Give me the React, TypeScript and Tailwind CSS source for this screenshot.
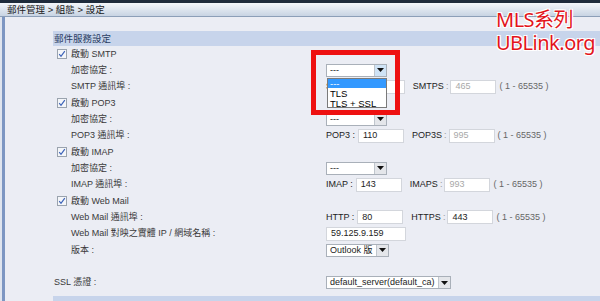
import React from 'react';

const ROW = 'h-[16.33px] flex items-center';

function Check() {
  return (
    <span className="w-[10px] h-[10px] border border-[#9aa3ae] bg-[#f4f6f9] flex items-center justify-center mr-[4px] shrink-0">
      <svg width="8" height="8" viewBox="0 0 8 8">
        <path d="M1.2 4.2 L3 6.3 L6.8 1.2" stroke="#3b62b8" strokeWidth="1.2" fill="none" />
      </svg>
    </span>
  );
}

function Select({ value, w, hover }: { value: string; w?: string; hover?: boolean }) {
  return (
    <div className={`${w ?? ''} h-[13px] border border-[#a9b0b9] bg-white flex items-center`}>
      <span className="flex-1 pl-[3px] pr-[3px] text-[9px] leading-none text-[#222] whitespace-nowrap">{value}</span>
      <span
        className={`w-[12px] h-[11px] shrink-0 border-l border-[#c0c6cd] flex items-center justify-center ${
          hover ? 'bg-[#cfe3f6]' : 'bg-[#e4e6ea]'
        }`}
      >
        <svg width="7" height="4" viewBox="0 0 7 4">
          <path d="M0 0 H7 L3.5 4 Z" fill="#111" />
        </svg>
      </span>
    </div>
  );
}

function Input({ value, w = 'w-[46px]', disabled }: { value: string; w?: string; disabled?: boolean }) {
  return (
    <span
      className={`${w} h-[14px] border border-[#d3d6dc] bg-white flex items-center pl-[4px] text-[9px] leading-none ${
        disabled ? 'text-[#a8a8a8]' : 'text-[#222]'
      }`}
    >
      {value}
    </span>
  );
}

function PortPair({ a, av, b, bv, bDisabled }: { a: string; av: string; b: string; bv: string; bDisabled?: boolean }) {
  return (
    <div className="flex items-center">
      <span className="text-[#222] mr-[1px]">{a} :</span>
      <span className="ml-[2px]"><Input value={av} /></span>
      <span className="text-[#222] ml-[8px]">{b}</span>
      <span className="text-[#999] ml-[2px]">:</span>
      <span className="ml-[2px]"><Input value={bv} disabled={bDisabled} /></span>
      <span className="ml-[3px] text-[#666]">( 1 - 65535 )</span>
    </div>
  );
}

function Label({ children, check, indent = true }: { children: React.ReactNode; check?: boolean; indent?: boolean }) {
  return (
    <div className={`w-[273px] flex items-center ${check ? 'pl-[4px]' : indent ? 'pl-[18px]' : 'pl-[1px]'}`}>
      {check && <Check />}
      <span className="text-[#3a3a3a]">{children}</span>
    </div>
  );
}

export default function App() {
  return (
    <div
      className="relative w-[600px] h-[301px] overflow-hidden bg-[#ebedf4] text-[9px] leading-none"
      style={{ fontFamily: "'Liberation Sans', 'Noto Sans CJK TC', sans-serif" }}
    >
      <div className="h-[3px] bg-[#1e2b3b]" />
      <div className="h-[14px] bg-gradient-to-b from-[#f3f6fa] to-[#c8d4e3] border-b border-[#8c9fb8] flex items-center pl-[7px] text-[9.5px] text-[#1a1a1a]">
        郵件管理 &gt; 組態 &gt; 設定
      </div>
      <div className="flex h-full">
        <div className="w-[2px] bg-[#dfe4ee]" />
        <div className="w-[3px] bg-[#7d96c2]" />
        <div className="flex-1 pl-[48px] pt-[14px]">
          <div className="h-[15px] bg-[#c7d4eb] flex items-center pl-[1px] text-[9.5px] text-[#2b3d63]">郵件服務設定</div>

          <div className={ROW}><Label check>啟動 SMTP</Label></div>
          <div className={ROW}><Label>加密協定 :</Label><Select value="---" w="w-[61px]" hover /></div>
          <div className={ROW}><Label>SMTP 通訊埠 :</Label><PortPair a="SMTP" av="25" b="SMTPS" bv="465" bDisabled /></div>

          <div className={ROW}><Label check>啟動 POP3</Label></div>
          <div className={ROW}><Label>加密協定 :</Label><Select value="---" w="w-[61px]" /></div>
          <div className={ROW}><Label>POP3 通訊埠 :</Label><PortPair a="POP3" av="110" b="POP3S" bv="995" bDisabled /></div>

          <div className={ROW}><Label check>啟動 IMAP</Label></div>
          <div className={ROW}><Label>加密協定 :</Label><Select value="---" w="w-[61px]" /></div>
          <div className={ROW}><Label>IMAP 通訊埠 :</Label><PortPair a="IMAP" av="143" b="IMAPS" bv="993" bDisabled /></div>

          <div className={ROW}><Label check>啟動 Web Mail</Label></div>
          <div className={ROW}><Label>Web Mail 通訊埠 :</Label><PortPair a="HTTP" av="80" b="HTTPS" bv="443" /></div>
          <div className={ROW}><Label>Web Mail 對映之實體 IP / 網域名稱 :</Label><Input value="59.125.9.159" w="w-[80px]" /></div>
          <div className={ROW}><Label>版本 :</Label><Select value="Outlook 版" /></div>
          <div className={ROW} />
          <div className={ROW}><Label indent={false}>SSL 憑證 :</Label><Select value="default_server(default_ca)" /></div>

          <div className="mt-[5px] h-[15px] bg-[#c7d4eb]" />
        </div>
      </div>

      {/* open dropdown list */}
      <div className="absolute left-[327px] top-[78px] w-[60px] h-[30px] border border-[#7a7a7a] bg-white text-[9.5px] leading-[9px] text-black">
        <div className="h-[9px] bg-[#3399ff] text-white pl-[2px] overflow-hidden">---</div>
        <div className="h-[9.5px] pl-[2px] pt-[1px] overflow-hidden">TLS</div>
        <div className="h-[9.5px] pl-[2px] pt-[1px] overflow-hidden">TLS + SSL</div>
      </div>

      {/* highlight box */}
      <div className="absolute left-[311px] top-[50px] w-[89px] h-[65px] border-[5px] border-[#ee1111]" />

      {/* watermark */}
      <div
        className="absolute left-[496px] top-[8px] text-[#e3141b] text-[20px] leading-[23px] tracking-[-0.5px] [text-shadow:1px_1px_0_#fff,-1px_-1px_0_#fff,1px_-1px_0_#fff,-1px_1px_0_#fff]"
        style={{ fontFamily: "'Noto Sans', 'Noto Sans CJK TC', sans-serif" }}
      >
        <div>MLS系列</div>
        <div>UBLink.org</div>
      </div>
    </div>
  );
}
